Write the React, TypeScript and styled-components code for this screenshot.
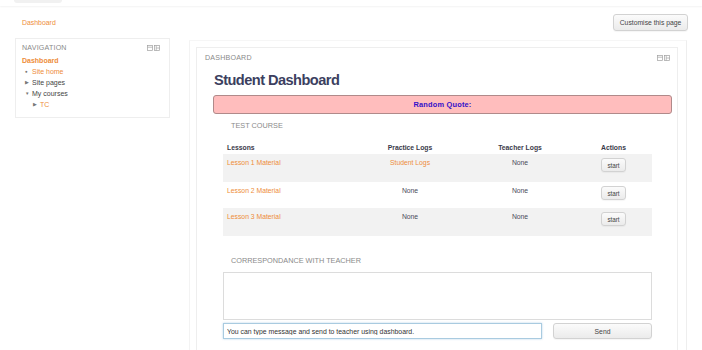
import React, { useState } from 'react';
import styled, { createGlobalStyle } from 'styled-components';

interface Lesson {
  id: number;
  title: string;
  practice: string;
  practiceIsLink: boolean;
  teacher: string;
}

const lessons: Lesson[] = [
  { id: 1, title: 'Lesson 1 Material', practice: 'Student Logs', practiceIsLink: true, teacher: 'None' },
  { id: 2, title: 'Lesson 2 Material', practice: 'None', practiceIsLink: false, teacher: 'None' },
  { id: 3, title: 'Lesson 3 Material', practice: 'None', practiceIsLink: false, teacher: 'None' },
];

const ORANGE = '#ee8d3a';
const GREY_HEAD = '#8a8a8a';

const GlobalStyle = createGlobalStyle`
  html, body {
    margin: 0;
    padding: 0;
    background: #fff;
    font-family: "Liberation Sans", Arial, Helvetica, sans-serif;
    color: #333;
  }
  * { box-sizing: border-box; }
`;

const Page = styled.div`
  width: 702px;
  height: 350px;
  overflow: hidden;
  display: flex;
  flex-direction: column;
`;

const TopBar = styled.div`
  height: 6px;
  flex: 0 0 6px;
  box-shadow: 0 1px 2px rgba(0, 0, 0, 0.05);
  display: flex;
`;

const TopTab = styled.div`
  margin-left: 14px;
  width: 48px;
  height: 3px;
  background: #f1f1f1;
  border-radius: 0 0 10px 10px;
`;

const PageHeader = styled.div`
  display: flex;
  align-items: center;
  justify-content: space-between;
  padding: 8px 14px 0 22px;
`;

const Crumb = styled.a`
  color: ${ORANGE};
  font-size: 6.9px;
  text-decoration: none;
`;

const GreyButton = styled.button<{ $w: number; $h: number }>`
  width: ${(p) => p.$w}px;
  height: ${(p) => p.$h}px;
  padding: 0;
  font-family: inherit;
  font-size: 6.8px;
  color: #444;
  border: 1px solid #d2d2d2;
  border-radius: 3px;
  background: linear-gradient(#fbfbfb, #ebebeb);
  box-shadow: 0 1px 1px rgba(0, 0, 0, 0.04);
`;

const Content = styled.div`
  flex: 1;
  display: flex;
  align-items: flex-start;
  padding-left: 15px;
  min-height: 0;
`;

const NavBlock = styled.div`
  width: 155px;
  height: 80px;
  margin-top: 7px;
  border: 1px solid #eeeeee;
  padding: 4px 9px 0 6px;
`;

const BlockHead = styled.div`
  display: flex;
  justify-content: space-between;
  align-items: center;
  height: 10px;
  font-size: 7.1px;
  letter-spacing: 0.2px;
  color: ${GREY_HEAD};
`;

const NavList = styled.ul`
  list-style: none;
  margin: 2px 0 0;
  padding: 0;
  font-size: 7px;
`;

const NavItem = styled.li<{ $indent?: number; $link?: boolean; $bold?: boolean }>`
  display: flex;
  align-items: center;
  height: 11px;
  padding-left: ${(p) => p.$indent ?? 0}px;
  color: ${(p) => (p.$link ? ORANGE : '#444')};
  font-weight: ${(p) => (p.$bold ? 700 : 400)};
`;

const Marker = styled.span`
  width: 7px;
  font-size: 4.5px;
  color: #777;
`;

const MainColumn = styled.div`
  margin-left: 19px;
  margin-top: 9px;
  width: 498px;
  height: 320px;
  border-left: 1px solid #f3f3f3;
  border-right: 1px solid #eeeeee;
  border-top: 1px solid #f6f6f6;
  padding: 6px 8px 0 6px;
`;

const Block = styled.div`
  height: 100%;
  border: 1px solid #eeeeee;
  border-bottom: none;
  padding-top: 5px;
`;

const BlockHeadRow = styled(BlockHead)`
  padding: 0 7px 0 8px;
`;

const BlockBody = styled.div`
  padding: 0 5px 0 16px;
  display: flex;
  flex-direction: column;
`;

const Title = styled.h2`
  margin: 8px 0 0 1px;
  font-size: 14.6px;
  letter-spacing: -0.55px;
  line-height: 18px;
  font-weight: 700;
  color: #3c3f5f;
`;

const QuoteBar = styled.div`
  margin-top: 6px;
  height: 19px;
  background: #ffbdbd;
  border: 1px solid #b08a8a;
  border-radius: 3px;
  display: flex;
  align-items: center;
  justify-content: center;
  font-size: 7.4px;
  letter-spacing: 0.2px;
  font-weight: 700;
  color: #3412c9;
`;

const SectionHead = styled.div<{ $top: number }>`
  margin: ${(p) => p.$top}px 0 0 18px;
  height: 10px;
  line-height: 10px;
  font-size: 7.3px;
  color: ${GREY_HEAD};
`;

const Table = styled.div`
  margin: 9px 0 0 10px;
  width: 429px;
  display: flex;
  flex-direction: column;
`;

const Row = styled.div<{ $shade?: boolean; $h: number }>`
  display: grid;
  grid-template-columns: 147px 80px 140px 47px 1fr;
  height: ${(p) => p.$h}px;
  background: ${(p) => (p.$shade ? '#f2f2f2' : '#fff')};
  font-size: 6.8px;
`;

const HeadCell = styled.div<{ $left?: boolean }>`
  display: flex;
  align-items: center;
  justify-content: ${(p) => (p.$left ? 'flex-start' : 'center')};
  padding-left: ${(p) => (p.$left ? 4 : 0)}px;
  font-weight: 700;
  color: #3a3a4a;
`;

const Cell = styled.div<{ $left?: boolean; $link?: boolean }>`
  display: flex;
  align-items: flex-start;
  justify-content: ${(p) => (p.$left ? 'flex-start' : 'center')};
  padding: 4px 0 0 ${(p) => (p.$left ? 4 : 0)}px;
  line-height: 10px;
  color: ${(p) => (p.$link ? ORANGE : '#4a4a5a')};
`;

const StartButton = styled(GreyButton)`
  font-size: 6.3px;
`;

const MessageArea = styled.textarea`
  margin: 6px 0 0 10px;
  width: 429px;
  height: 48px;
  border: 1px solid #dcdcdc;
  resize: none;
  outline: none;
`;

const SendRow = styled.div`
  margin: 3px 0 0 10px;
  width: 429px;
  display: flex;
  gap: 11px;
`;

const MessageInput = styled.input`
  width: 319px;
  height: 16px;
  padding: 0 3px;
  font-family: inherit;
  font-size: 6.9px;
  color: #333;
  border: 1px solid #a9cbe0;
  box-shadow: 0 0 2px rgba(100, 160, 210, 0.45);
  outline: none;
`;

const BlockIcons = () => (
  <svg width="13" height="6" viewBox="0 0 13 6">
    <g fill="none" stroke="#a0a0a0" strokeWidth="0.7">
      <rect x="0.5" y="0.5" width="5" height="5" />
      <line x1="0.5" y1="2.2" x2="5.5" y2="2.2" />
      <rect x="7.5" y="0.5" width="5" height="5" />
      <line x1="9.2" y1="0.5" x2="9.2" y2="5.5" />
      <line x1="9.2" y1="3" x2="12.5" y2="3" />
    </g>
  </svg>
);

const App = () => {
  const [message, setMessage] = useState('You can type message and send to teacher using dashboard.');

  return (
    <Page>
      <GlobalStyle />
      <TopBar>
        <TopTab />
      </TopBar>
      <PageHeader>
        <Crumb>Dashboard</Crumb>
        <GreyButton $w={75} $h={17}>Customise this page</GreyButton>
      </PageHeader>
      <Content>
        <NavBlock>
          <BlockHead>
            NAVIGATION
            <BlockIcons />
          </BlockHead>
          <NavList>
            <NavItem $link $bold>Dashboard</NavItem>
            <NavItem $indent={3} $link>
              <Marker>●</Marker>Site home
            </NavItem>
            <NavItem $indent={3}>
              <Marker>▶</Marker>Site pages
            </NavItem>
            <NavItem $indent={3}>
              <Marker>▼</Marker>My courses
            </NavItem>
            <NavItem $indent={11} $link>
              <Marker>▶</Marker>TC
            </NavItem>
          </NavList>
        </NavBlock>
        <MainColumn>
          <Block>
            <BlockHeadRow>
              DASHBOARD
              <BlockIcons />
            </BlockHeadRow>
            <BlockBody>
              <Title>Student Dashboard</Title>
              <QuoteBar>Random Quote:</QuoteBar>
              <SectionHead $top={7}>TEST COURSE</SectionHead>
              <Table>
                <Row $h={14}>
                  <HeadCell $left>Lessons</HeadCell>
                  <HeadCell>Practice Logs</HeadCell>
                  <HeadCell>Teacher Logs</HeadCell>
                  <HeadCell>Actions</HeadCell>
                  <div />
                </Row>
                {lessons.map((l, i) => (
                  <Row key={l.id} $shade={i % 2 === 0} $h={i === 1 ? 26 : 28}>
                    <Cell $left $link>{l.title}</Cell>
                    <Cell $link={l.practiceIsLink}>{l.practice}</Cell>
                    <Cell>{l.teacher}</Cell>
                    <Cell>
                      <StartButton $w={25} $h={14}>start</StartButton>
                    </Cell>
                    <div />
                  </Row>
                ))}
              </Table>
              <SectionHead $top={20}>CORRESPONDANCE WITH TEACHER</SectionHead>
              <MessageArea />
              <SendRow>
                <MessageInput value={message} onChange={(e) => setMessage(e.target.value)} />
                <GreyButton $w={99} $h={16}>Send</GreyButton>
              </SendRow>
            </BlockBody>
          </Block>
        </MainColumn>
      </Content>
    </Page>
  );
};

export default App;
